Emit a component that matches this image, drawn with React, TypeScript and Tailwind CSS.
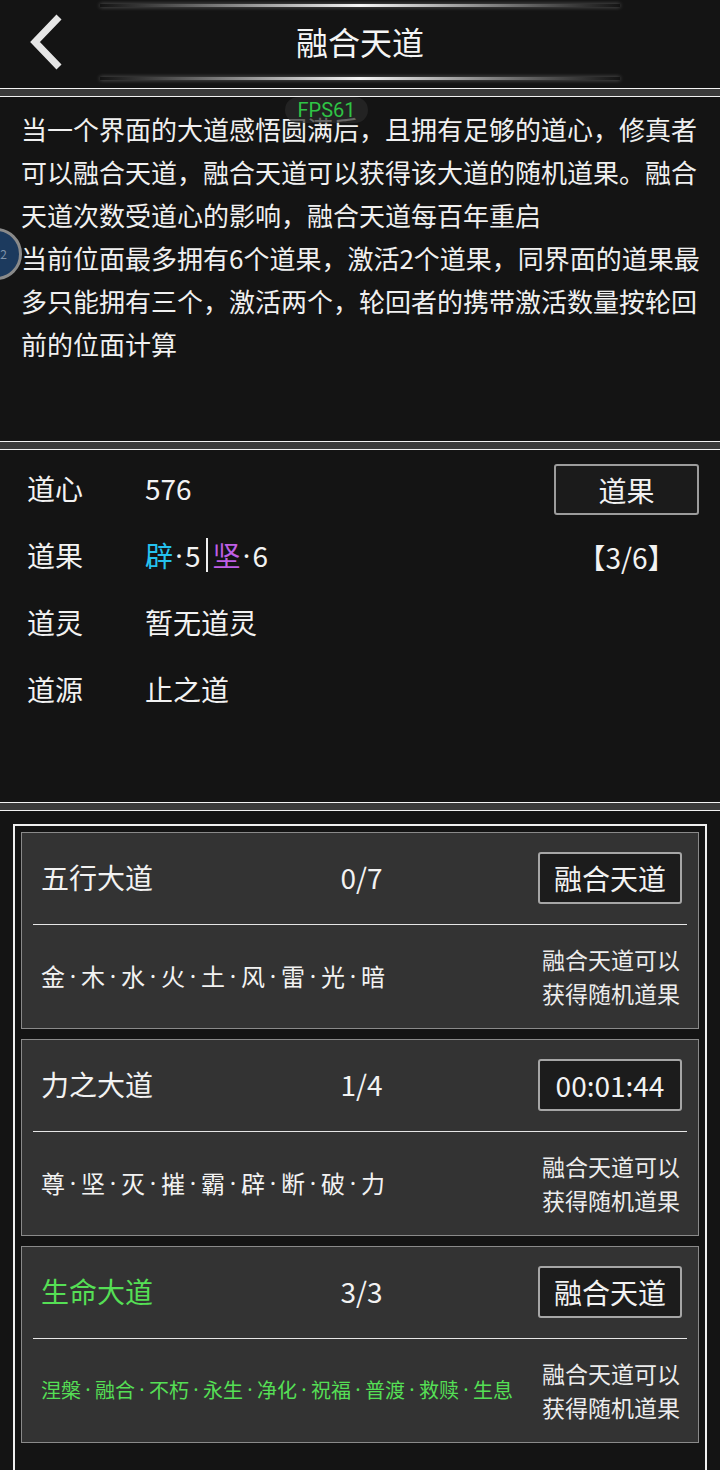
import React from "react"

const font = { fontFamily: '"Noto Sans CJK SC", "Noto Sans", sans-serif' }

type Dao = {
  name: string
  count: string
  action: string
  items: string[]
  green?: boolean
}

const daos: Dao[] = [
  { name: "五行大道", count: "0/7", action: "融合天道", items: ["金", "木", "水", "火", "土", "风", "雷", "光", "暗"] },
  { name: "力之大道", count: "1/4", action: "00:01:44", items: ["尊", "坚", "灭", "摧", "霸", "辟", "断", "破", "力"] },
  {
    name: "生命大道",
    count: "3/3",
    action: "融合天道",
    items: ["涅槃", "融合", "不朽", "永生", "净化", "祝福", "普渡", "救赎", "生息"],
    green: true,
  },
]

function Separator() {
  return <div className="h-[9px] border-y border-[#f2f2f2] bg-[#3a3a3a]" />
}

function GlowLine() {
  return (
    <div className="mx-[100px] h-[3px] bg-linear-to-r from-transparent via-[#f4f4f4] to-transparent shadow-[0_0_4px_rgba(255,255,255,0.35)]" />
  )
}

function Dot({ w }: { w: string }) {
  return <span className={`${w} inline-block text-center font-['Noto_Sans']`}>·</span>
}

function Header() {
  return (
    <div className="flex h-[88px] flex-col bg-[#141414] pt-[4px]">
      <GlowLine />
      <div className="grid h-[70px] grid-cols-[1fr_auto_1fr] items-center">
        <div className="pl-[26px]">
          <svg width="40" height="56" viewBox="0 0 40 56" fill="none">
            <polyline points="33,3 9,28 33,53" stroke="#e6e6e6" strokeWidth="7" strokeLinejoin="miter" />
          </svg>
        </div>
        <h1 className="-mt-[3px] text-[32px] leading-none text-[#f5f5f5]">融合天道</h1>
        <div />
      </div>
      <GlowLine />
    </div>
  )
}

function Intro() {
  return (
    <div className="h-[344px] bg-[#141414] pl-[21px] pr-[19px] pt-[10px] text-[26px] leading-[43px] text-[#f0f0f0]">
      <p>当一个界面的大道感悟圆满后，且拥有足够的道心，修真者可以融合天道，融合天道可以获得该大道的随机道果。融合天道次数受道心的影响，融合天道每百年重启</p>
      <p>当前位面最多拥有6个道果，激活2个道果，同界面的道果最多只能拥有三个，激活两个，轮回者的携带激活数量按轮回前的位面计算</p>
    </div>
  )
}

function Stats() {
  const rows = [
    {
      label: "道心",
      value: <span>576</span>,
      right: (
        <button className="h-[51px] w-full rounded-[3px] border-2 border-[#9c9c9c] bg-[#1b1b1b] text-[28px] text-[#f2f2f2]">
          道果
        </button>
      ),
    },
    {
      label: "道果",
      value: (
        <span className="flex items-center">
          <span className="text-[#25c2ef]">辟</span>
          <Dot w="w-[12px]" />
          <span>5</span>
          <span className="mx-[5px] inline-block h-[34px] w-[2px] bg-[#f0f0f0]" />
          <span className="text-[#bf5fe6]">坚</span>
          <Dot w="w-[12px]" />
          <span>6</span>
        </span>
      ),
      right: <div className="text-center">【3/6】</div>,
    },
    { label: "道灵", value: <span>暂无道灵</span>, right: null },
    { label: "道源", value: <span>止之道</span>, right: null },
  ]
  return (
    <div className="h-[352px] bg-[#141414] pl-[27px] pr-[21px] pt-[6px] text-[28px] text-[#f2f2f2]">
      {rows.map((r) => (
        <div key={r.label} className="grid h-[67px] grid-cols-[118px_1fr_145px] items-center">
          <span className="-mt-[3px]">{r.label}</span>
          <div className="-mt-[3px]">{r.value}</div>
          <div>{r.right}</div>
        </div>
      ))}
    </div>
  )
}

function DaoCard({ dao }: { dao: Dao }) {
  const color = dao.green ? "text-[#55df55]" : "text-[#f2f2f2]"
  return (
    <div className="h-[197px] border border-[#8a8a8a] bg-[#333333] pt-[19px]">
      <div className="grid h-[52px] grid-cols-[1fr_auto_1fr] items-center pl-[19px] pr-[16px]">
        <span className={`-mt-[3px] text-[28px] ${color}`}>{dao.name}</span>
        <span className="-mt-[3px] text-[28px] text-[#f2f2f2]">{dao.count}</span>
        <button className="h-[52px] w-[144px] justify-self-end rounded-[3px] border-2 border-[#a6a6a6] bg-[#1c1c1c] text-[28px] text-[#f2f2f2]">
          {dao.action}
        </button>
      </div>
      <div className="mx-[11px] mt-[20px] h-px bg-[#e6e6e6]" />
      <div className="flex h-[103px] items-center justify-between pl-[19px] pr-[18px]">
        <div className={`-mt-[2px] flex items-center ${dao.green ? "text-[20px]" : "text-[24px]"} ${color}`}>
          {dao.items.map((it, i) => (
            <React.Fragment key={it}>
              {i > 0 && <Dot w={dao.green ? "w-[14px]" : "w-[16px]"} />}
              <span>{it}</span>
            </React.Fragment>
          ))}
        </div>
        <div className="-mt-[2px] text-right text-[23px] leading-[34px] text-[#ececec]">
          <div>融合天道可以</div>
          <div>获得随机道果</div>
        </div>
      </div>
    </div>
  )
}

export default function App() {
  return (
    <div className="relative w-[720px] overflow-hidden bg-[#141414]" style={font}>
      <Header />
      <Separator />
      <Intro />
      <Separator />
      <Stats />
      <Separator />
      <div className="bg-[#141414] pt-[13px]">
        <div className="mx-[13px] flex flex-col gap-[10px] border-2 border-[#f0f0f0] p-[6px] pb-[60px]">
          {daos.map((d) => (
            <DaoCard key={d.name} dao={d} />
          ))}
        </div>
      </div>

      {/* debug overlays */}
      <div
        className="absolute left-[285px] top-[97px] flex h-[26px] w-[83px] items-center justify-center rounded-full bg-[#2a2a2a]/70 text-[20px] leading-none text-[#2fc445]"
        style={{ fontFamily: "Roboto, sans-serif" }}
      >
        FPS61
      </div>
      <div className="absolute left-[-30px] top-[228px] flex h-[52px] w-[52px] items-center justify-end rounded-full border-[3px] border-[#8a8a8a] bg-[#1c3a5e] pr-[12px] text-[12px] text-[#7f93aa]">
        22
      </div>
    </div>
  )
}
